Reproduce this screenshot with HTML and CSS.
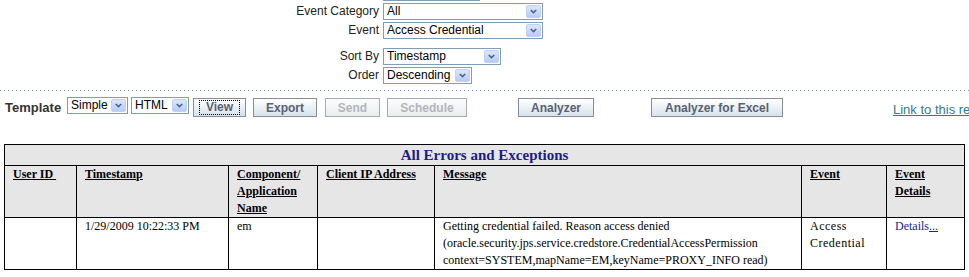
FILE: index.html
```html
<!DOCTYPE html>
<html lang="en">
<head>
  <meta charset="UTF-8" />
  <title>Audit Report</title>
  <link rel="stylesheet" href="styles.css">
</head>
<body>
  <!-- Filters -->
  <div class="filters filters-top">
    <span class="filter-label"></span>
    <div class="text-box"></div>

    <span class="filter-label">Event Category</span>
    <div class="select w-category">
      <span class="value">All</span>
      <span class="arrow"><svg viewBox="0 0 9 6"><polyline points="1,1 4.5,4.5 8,1" /></svg></span>
    </div>

    <span class="filter-label">Event</span>
    <div class="select w-category">
      <span class="value">Access Credential</span>
      <span class="arrow"><svg viewBox="0 0 9 6"><polyline points="1,1 4.5,4.5 8,1" /></svg></span>
    </div>
  </div>

  <div class="filters filters-sort">
    <span class="filter-label">Sort By</span>
    <div class="select w-sort">
      <span class="value">Timestamp</span>
      <span class="arrow"><svg viewBox="0 0 9 6"><polyline points="1,1 4.5,4.5 8,1" /></svg></span>
    </div>

    <span class="filter-label">Order</span>
    <div class="select w-order">
      <span class="value">Descending</span>
      <span class="arrow"><svg viewBox="0 0 9 6"><polyline points="1,1 4.5,4.5 8,1" /></svg></span>
    </div>
  </div>

  <div class="divider"></div>

  <!-- Toolbar -->
  <div class="toolbar">
    <span class="template-label">Template</span>
    <div class="select w-template">
      <span class="value">Simple</span>
      <span class="arrow"><svg viewBox="0 0 9 6"><polyline points="1,1 4.5,4.5 8,1" /></svg></span>
    </div>
    <div class="select w-format">
      <span class="value">HTML</span>
      <span class="arrow"><svg viewBox="0 0 9 6"><polyline points="1,1 4.5,4.5 8,1" /></svg></span>
    </div>
    <button class="btn btn-view"><span class="focus-ring">View</span></button>
    <button class="btn btn-export">Export</button>
    <button class="btn btn-send" disabled>Send</button>
    <button class="btn btn-schedule" disabled>Schedule</button>
    <button class="btn btn-analyzer">Analyzer</button>
    <button class="btn btn-excel">Analyzer for Excel</button>
    <a class="report-link" href="#">Link to this report</a>
  </div>

  <!-- Report -->
  <table class="report">
    <colgroup>
      <col class="col-user">
      <col class="col-time">
      <col class="col-app">
      <col class="col-ip">
      <col class="col-msg">
      <col class="col-event">
      <col class="col-details">
    </colgroup>
    <thead>
      <tr>
        <th class="report-title" colspan="7">All Errors and Exceptions</th>
      </tr>
      <tr>
        <th><u>User ID&nbsp;</u></th>
        <th><u>Timestamp</u></th>
        <th><u>Component/</u><br><u>Application</u><br><u>Name</u></th>
        <th><u>Client IP Address</u></th>
        <th><u>Message</u></th>
        <th><u>Event</u></th>
        <th><u>Event</u><br><u>Details</u></th>
      </tr>
    </thead>
    <tbody>
      <tr>
        <td></td>
        <td>1/29/2009 10:22:33 PM</td>
        <td>em</td>
        <td></td>
        <td class="message">Getting credential failed. Reason access denied<br>(oracle.security.jps.service.credstore.CredentialAccessPermission<br>context=SYSTEM,mapName=EM,keyName=PROXY_INFO read)</td>
        <td class="event">Access<br>Credential</td>
        <td class="details">Details<a href="#">...</a></td>
      </tr>
    </tbody>
  </table>
</body>
</html>
```

FILE: styles.css
```css
html, body {
  margin: 0;
  overflow: hidden;
}

body {
  font-family: 'Liberation Sans', Arial, sans-serif;
  font-size: 12px;
  color: #000;
  background: #fff;
}

/* filters */

.filters {
  display: grid;
  grid-template-columns: 379px auto;
  column-gap: 4px;
  row-gap: 2px;
  align-items: center;
  justify-items: start;
}

.filters-top {
  margin-top: -16px;
}

.filters-sort {
  margin-top: 9px;
}

.filter-label {
  justify-self: end;
  color: #222;
  line-height: 17px;
  white-space: nowrap;
}

.text-box {
  width: 97px;
  height: 17px;
  box-sizing: border-box;
  border: 1px solid #7f9db9;
  background: #fff;
}

.select {
  display: flex;
  align-items: center;
  height: 17px;
  box-sizing: border-box;
  border: 1px solid #7f9db9;
  background: #fff;
  padding-left: 3px;
}

.select .value {
  flex: 1;
  white-space: nowrap;
  overflow: hidden;
  line-height: 15px;
}

.select .arrow {
  width: 15px;
  height: 13px;
  margin-right: 1px;
  box-sizing: border-box;
  border: 1px solid #c0d0f6;
  border-radius: 2px;
  background: linear-gradient(#dce6fd, #b7cbf8);
  display: flex;
  align-items: center;
  justify-content: center;
}

.select .arrow svg {
  width: 7px;
  height: 5px;
  fill: none;
  stroke: #4d6185;
  stroke-width: 2;
}

.w-category { width: 160px; }
.w-sort { width: 118px; }
.w-order { width: 89px; }
.w-template { width: 61px; }
.w-format { width: 58px; margin-left: 3px; }

.divider {
  margin-top: 6px;
  height: 1px;
  background-image: linear-gradient(to right, #8a99a8 1px, transparent 1px);
  background-size: 4px 1px;
  background-repeat: repeat-x;
}

/* toolbar */

.toolbar {
  display: flex;
  align-items: flex-start;
  margin-top: 6px;
  height: 21px;
  padding-left: 5px;
  white-space: nowrap;
}

.toolbar > * {
  flex-shrink: 0;
}

.template-label {
  width: 62px;
  margin-top: 2px;
  font-size: 13px;
  font-weight: bold;
  line-height: 17px;
  color: #333;
}

.btn {
  height: 19px;
  margin-top: 1px;
  padding: 0;
  box-sizing: border-box;
  border: 1px solid #878c9d;
  background: linear-gradient(#ffffff, #d5e3ea);
  font-family: 'Liberation Sans', Arial, sans-serif;
  font-size: 12px;
  font-weight: bold;
  color: #5b6075;
  text-align: center;
  cursor: pointer;
}

.btn:disabled {
  color: #b3b5bb;
  border-color: #a7aab3;
  background: linear-gradient(#fcfcfc, #eaedef);
  cursor: default;
}

.focus-ring {
  display: inline-block;
  padding: 0 6px;
  line-height: 13px;
  border: 1px dotted #000;
}

.btn-view { width: 53px; margin-left: 4px; }
.btn-export { width: 64px; margin-left: 7px; }
.btn-send { width: 55px; margin-left: 8px; }
.btn-schedule { width: 80px; margin-left: 7px; }
.btn-analyzer { width: 76px; margin-left: 51px; }
.btn-excel { width: 132px; margin-left: 57px; }

.report-link {
  margin-left: 110px;
  margin-top: 5px;
  font-size: 13px;
  line-height: 16px;
  color: #2f7a94;
  text-decoration: underline;
}

/* report table */

.report {
  margin: 26px 0 0 4px;
  width: 961px;
  table-layout: fixed;
  border-collapse: collapse;
  border: 1px solid #000;
  font-family: 'Liberation Serif', 'Times New Roman', serif;
  font-size: 12px;
  line-height: 17px;
}

.col-user { width: 72px; }
.col-time { width: 152px; }
.col-app { width: 89px; }
.col-ip { width: 117px; }
.col-msg { width: 367px; }
.col-event { width: 85px; }
.col-details { width: 78px; }

.report th,
.report td {
  border: 1px solid #000;
  padding: 0 8px;
  vertical-align: top;
  text-align: left;
}

.report th {
  background: #e6e6e6;
  font-weight: bold;
}

.report th.report-title {
  height: 20px;
  padding: 0;
  line-height: 20px;
  font-size: 15px;
  text-align: center;
  vertical-align: middle;
  color: #1c1c8c;
}

.report td {
  background: #fff;
}

.report .message {
  white-space: nowrap;
  overflow: hidden;
}

.report .event {
  letter-spacing: 0.5px;
}

.report .details {
  color: #1c1c8c;
}

.report .details a {
  color: #1a1ad6;
}
```
